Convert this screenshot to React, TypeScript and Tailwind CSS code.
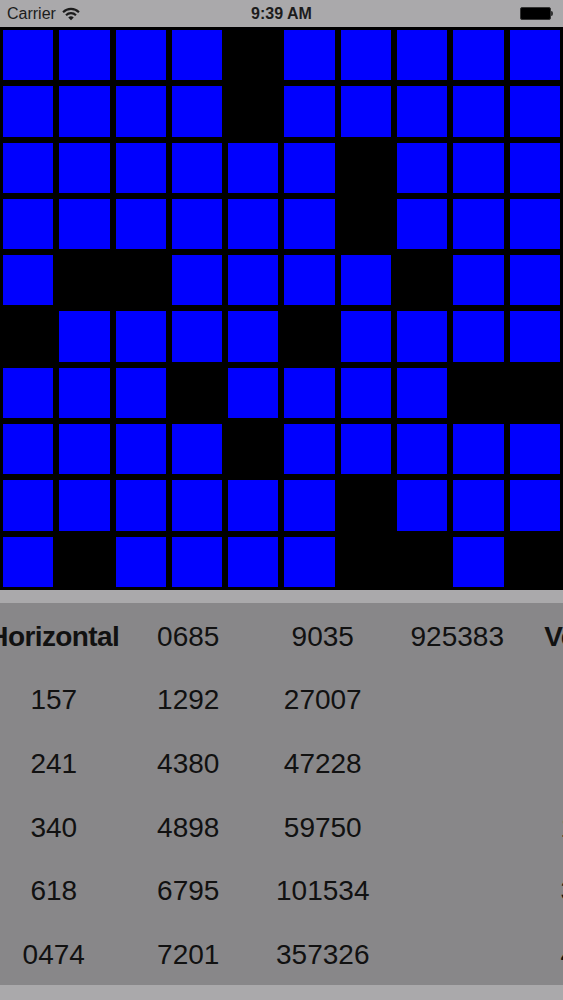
import React from 'react';

const cells: number[][] = [
    [1, 1, 1, 1, 0, 1, 1, 1, 1, 1],
    [1, 1, 1, 1, 0, 1, 1, 1, 1, 1],
    [1, 1, 1, 1, 1, 1, 0, 1, 1, 1],
    [1, 1, 1, 1, 1, 1, 0, 1, 1, 1],
    [1, 0, 0, 1, 1, 1, 1, 0, 1, 1],
    [0, 1, 1, 1, 1, 0, 1, 1, 1, 1],
    [1, 1, 1, 0, 1, 1, 1, 1, 0, 0],
    [1, 1, 1, 1, 0, 1, 1, 1, 1, 1],
    [1, 1, 1, 1, 1, 1, 0, 1, 1, 1],
    [1, 0, 1, 1, 1, 1, 0, 0, 1, 0],
];

const header = ['Horizontal', '0685', '9035', '925383', 'Vertical'];

const rows: string[][] = [
    ['157', '1292', '27007', '', '905'],
    ['241', '4380', '47228', '', '962'],
    ['340', '4898', '59750', '', '1017'],
    ['618', '6795', '101534', '', '3286'],
    ['0474', '7201', '357326', '', '4531'],
];

const StatusBar: React.FC = () => (
    <div className="h-[27px] bg-[#aaa9ab] flex items-center px-[7px] text-[#1c1c1c] text-[16px] relative">
        <div className="flex items-center gap-[6px]">
            <span>Carrier</span>
            <svg width="18" height="14" viewBox="0 0 17 13">
                <path d="M1 4.8 A10.5 10.5 0 0 1 16 4.8" stroke="#1c1c1c" strokeWidth="2" fill="none" />
                <path d="M3.8 7.6 A6.6 6.6 0 0 1 13.2 7.6" stroke="#1c1c1c" strokeWidth="2" fill="none" />
                <path d="M8.5 12.5 L5.9 9.9 A3.7 3.7 0 0 1 11.1 9.9 Z" fill="#1c1c1c" />
            </svg>
        </div>
        <div className="absolute left-0 right-0 text-center font-semibold pointer-events-none">9:39 AM</div>
        <div className="ml-auto flex items-center mr-[3px]">
            <div className="w-[31px] h-[13px] rounded-[2px] border border-[#333] bg-black" />
            <div className="w-[2px] h-[5px] bg-[#333] rounded-r-sm" />
        </div>
    </div>
);

const Board: React.FC = () => (
    <div className="grid grid-cols-10 bg-black w-[563px] h-[563px]">
        {cells.flat().map((c, i) => (
            <div key={i} className="p-[3px]">
                {c === 1 && <div className="w-full h-full bg-[#0000fe]" />}
            </div>
        ))}
    </div>
);

const Table: React.FC = () => (
    <div className="h-[382px] bg-[#888789] overflow-hidden pt-[2px]">
        <div className="-ml-[13.5px] w-[672.5px]">
            <div className="grid grid-cols-5 h-[63.6px] items-center">
                {header.map((h, i) => (
                    <div
                        key={i}
                        className={`text-center whitespace-nowrap ${i === 0 || i === 4 ? 'font-bold tracking-[-0.6px]' : ''}`}
                    >
                        {h}
                    </div>
                ))}
            </div>
            {rows.map((r, ri) => (
                <div key={ri} className="grid grid-cols-5 h-[63.6px] items-center">
                    {r.map((v, ci) => (
                        <div key={ci} className="text-center whitespace-nowrap">
                            {v}
                        </div>
                    ))}
                </div>
            ))}
        </div>
    </div>
);

const App: React.FC = () => {
    return (
        <div className="w-[563px] h-[1000px] bg-[#aaa9ab] overflow-hidden" style={{ fontFamily: '"Liberation Sans", Arial, sans-serif' }}>
            <StatusBar />
            <Board />
            <div className="h-[13px]" />
            <div className="text-[28px] text-[#111]">
                <Table />
            </div>
        </div>
    );
};

export default App;
